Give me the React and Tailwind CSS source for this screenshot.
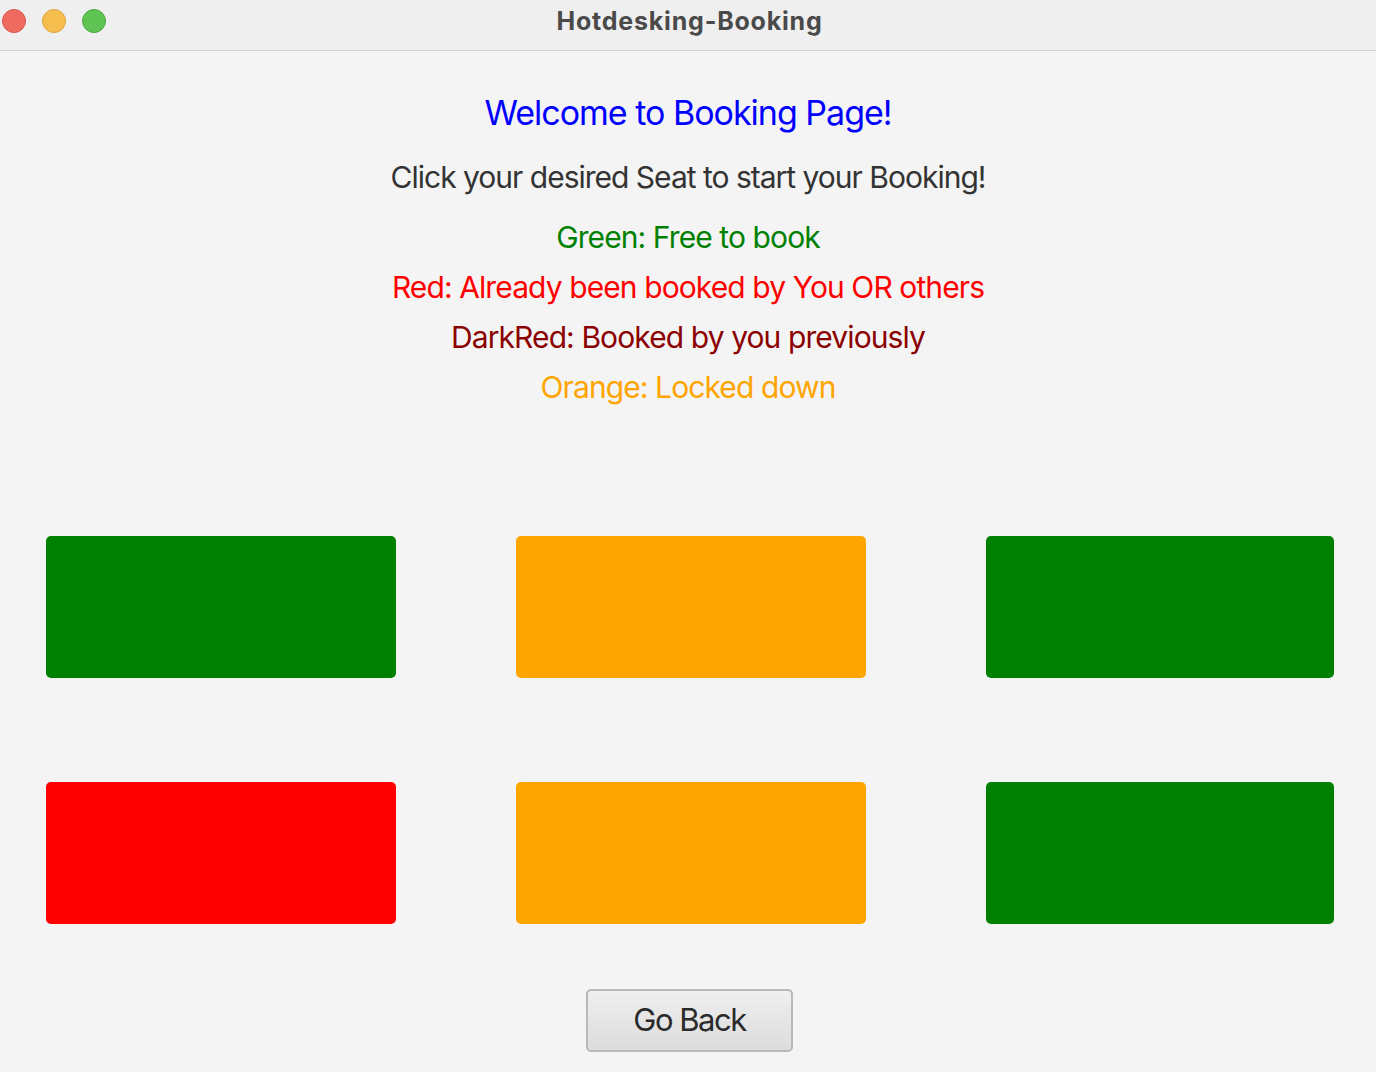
import React from "react";

const legend = [
  { text: "Green: Free to book", color: "text-[#008000]" },
  { text: "Red: Already been booked by You OR others", color: "text-[#ff0000]" },
  { text: "DarkRed: Booked by you previously", color: "text-[#8b0000]" },
  { text: "Orange: Locked down", color: "text-[#ffa500]" },
];

const seats = [
  "bg-[#008000]",
  "bg-[#ffa500]",
  "bg-[#008000]",
  "bg-[#ff0000]",
  "bg-[#ffa500]",
  "bg-[#008000]",
];

export default function App() {
  return (
    <div className="w-[1376px] h-[1072px] bg-[#f4f4f4] font-['Inter','Noto_Sans',sans-serif] overflow-hidden">
      <div className="h-[51px] bg-[#efefef] border-b border-[#d2d2d2] relative">
        <div className="absolute left-[2px] top-[9px] flex gap-[16px]">
          <span className="w-[24px] h-[24px] rounded-full bg-[#ef6b5f] border border-[#d9534a]" />
          <span className="w-[24px] h-[24px] rounded-full bg-[#f6be4f] border border-[#dea23a]" />
          <span className="w-[24px] h-[24px] rounded-full bg-[#5fc453] border border-[#4aa83f]" />
        </div>
        <div className="text-center text-[25px] font-bold text-[#4a4a4a] leading-[42px] tracking-[0.8px] pl-[3px]">
          Hotdesking-Booking
        </div>
      </div>

      <div className="flex flex-col items-center pt-[37px]">
        <div className="h-[50px] leading-[50px] text-[34px] text-[#0000ff] tracking-[-1px]">
          Welcome to Booking Page!
        </div>
        <div className="mt-[14px] h-[50px] leading-[50px] text-[30px] text-[#333333] tracking-[-1px]">
          Click your desired Seat to start your Booking!
        </div>
        <div className="mt-[10px] flex flex-col items-center">
          {legend.map((l) => (
            <div key={l.text} className={`h-[50px] leading-[50px] text-[30px] tracking-[-0.9px] ${l.color}`}>
              {l.text}
            </div>
          ))}
        </div>
      </div>

      <div className="mt-[124px] pl-[46px] grid grid-cols-[350px_350px_348px] gap-x-[120px] gap-y-[104px]">
        {seats.map((c, i) => (
          <button key={i} className={`h-[142px] rounded-[5px] ${c}`} />
        ))}
      </div>

      <div className="mt-[65px] flex justify-center pl-[3px]">
        <button className="w-[207px] h-[63px] rounded-[5px] border-2 border-[#b8b8b8] bg-gradient-to-b from-[#efefef] to-[#dcdcdc] text-[31px] text-[#2b2b2b] tracking-[-1.5px]">
          Go Back
        </button>
      </div>
    </div>
  );
}
